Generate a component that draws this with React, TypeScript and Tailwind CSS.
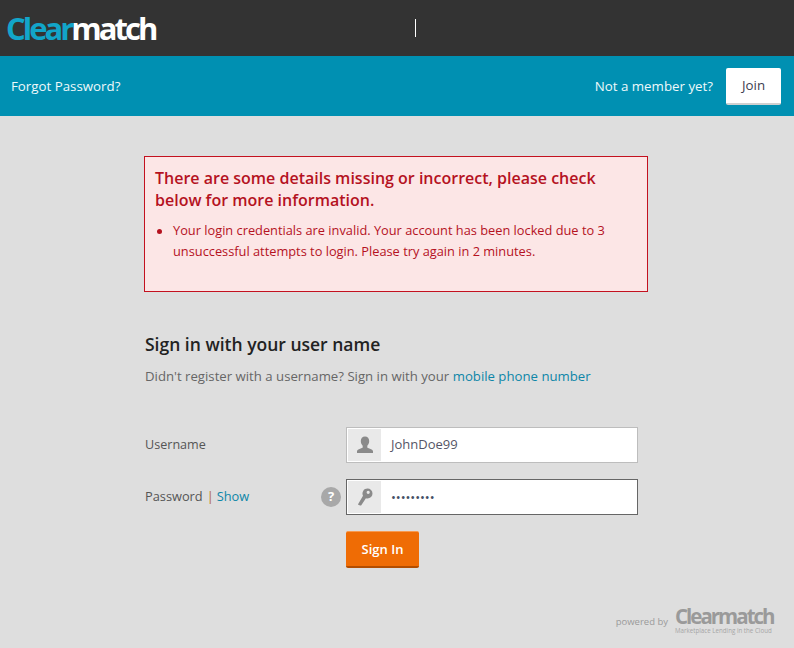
import React from 'react';

const UserIcon = () => (
  <svg width="18" height="18" viewBox="0 0 18 18" className="fill-[#8a8a8a]">
    <path d="M9 0.500c2.600 0 4.200 2 4.200 4.600 0 1.900-.8 3.600-1.900 4.600v1.500c0 .6 1 .9 2.600 1.500 1.600.6 3.100 1.200 3.100 2.600V17H1v-1.700c0-1.400 1.500-2 3.100-2.600 1.600-.6 2.600-.9 2.600-1.500V9.700C5.600 8.700 4.800 7 4.800 5.100 4.800 2.500 6.400.5 9 .5z" />
  </svg>
);

const KeyIcon = () => (
  <svg width="16" height="18" viewBox="0 0 16 18" className="fill-[#8a8a8a]">
    <path fillRule="evenodd" d="M10.500 0.500a5 5 0 0 1 0 10c-.6 0-1.100-.1-1.600-.3L4.300 17.200a1 1 0 0 1-1 .4l-1.600-.5a.8.8 0 0 1-.5-1.100L6 7.800a5 5 0 0 1 4.500-7.300zM11.200 2.700a1.600 1.600 0 1 0 0 3.200 1.600 1.600 0 0 0 0-3.200z" />
  </svg>
);

export default function App() {
  return (
    <div className="h-[648px] w-[794px] overflow-hidden bg-[#dedede] font-['Open_Sans',sans-serif]">
      <div className="flex h-14 items-center bg-[#333333] pl-[6px]">
        <div className="w-[409px] text-[31px] font-bold leading-none tracking-[-3px] text-white">
          <span className="text-[#12a5c9]">Clear</span>match
        </div>
        <div className="h-[18px] w-px bg-white" />
      </div>

      <div className="flex h-[60px] items-center justify-between bg-[#0090b2] pl-[11px] pr-[13px]">
        <a className="pt-px text-[13.300px] text-[#eef9fb]">Forgot Password?</a>
        <div className="flex items-center gap-[13px]">
          <span className="pt-px text-[13.300px] text-[#eef9fb]">Not a member yet?</span>
          <button className="h-[37px] w-[55px] rounded-[2px] border-b-2 border-[#d0d0d0] bg-white pt-px text-[13.300px] text-[#3c3c50]">
            Join
          </button>
        </div>
      </div>

      <div className="pl-[144px] pt-10">
        <div className="h-[136px] w-[504px] border border-[#c3111f] bg-[#fce6e6] pl-[10px] pr-4 pt-[10px] text-[#b5121f]">
          <h2 className="text-[16px] font-semibold leading-[22px]">
            There are some details missing or incorrect, please check below for more information.
          </h2>
          <ul className="mt-[9px] flex">
            <li className="flex">
              <span className="ml-[2px] mt-[9px] h-[5px] w-[5px] shrink-0 rounded-full bg-[#b5121f]" />
              <p className="ml-[11px] text-[12.800px] leading-[21px]">
                Your login credentials are invalid. Your account has been locked due to 3 unsuccessful attempts to login. Please try again in 2 minutes.
              </p>
            </li>
          </ul>
        </div>

        <h1 className="ml-px mt-[38px] text-[17.500px] font-semibold leading-[28px] text-[#222222]">
          Sign in with your user name
        </h1>
        <p className="ml-px mt-[9px] text-[13.200px] leading-[18px] text-[#666666]">
          Didn't register with a username? Sign in with your <a className="text-[#0d86a8]">mobile phone number</a>
        </p>

        <div className="ml-px mt-[42px] flex h-9 items-center">
          <label className="w-[201px] text-[12.600px] text-[#555555]">Username</label>
          <div className="flex h-9 w-[292px] items-center border border-[#bdbdbd] bg-white p-px">
            <span className="flex h-full w-[33px] items-center justify-center bg-[#e9e9e9]">
              <UserIcon />
            </span>
            <span className="pl-[10px] text-[13px] text-[#555566]">JohnDoe99</span>
          </div>
        </div>

        <div className="ml-px mt-4 flex h-9 items-center">
          <div className="flex w-[176px] items-center text-[12.800px] text-[#555555]">
            Password <span className="ml-[4px] mr-[3px] text-[#b06a30]">|</span> <a className="text-[#0d86a8]">Show</a>
          </div>
          <span className="flex h-5 w-5 items-center justify-center rounded-full bg-[#a8a8a8] text-[13px] font-bold text-white">
            ?
          </span>
          <div className="ml-[5px] flex h-9 w-[292px] items-center border border-[#666666] bg-white p-px">
            <span className="flex h-full w-[33px] items-center justify-center bg-[#e9e9e9]">
              <KeyIcon />
            </span>
            <span className="pl-[10px] text-[13px] leading-none tracking-[-0.050px] text-[#445066]">•••••••••</span>
          </div>
        </div>

        <button className="ml-[202px] mt-4 h-[37px] w-[73px] rounded-[2px] border-b-2 border-t border-b-[#b34d00] border-t-[#f79a50] bg-[#ef6c05] pt-px text-[13px] font-semibold text-white">
          Sign In
        </button>
      </div>

      <div className="mr-[19px] mt-[38px] flex items-start justify-end">
        <span className="mr-[7px] mt-[9px] text-[9.500px] text-[#9a9a9a]">powered by</span>
        <div className="flex w-[100px] flex-col">
          <span className="text-[20.500px] font-bold leading-[20px] tracking-[-2px] text-[#9a9a9a]">Clearmatch</span>
          <span className="mt-px whitespace-nowrap text-[6.200px] leading-[7px] text-[#a5a5a5]">Marketplace Lending in the Cloud</span>
        </div>
      </div>
    </div>
  );
}
